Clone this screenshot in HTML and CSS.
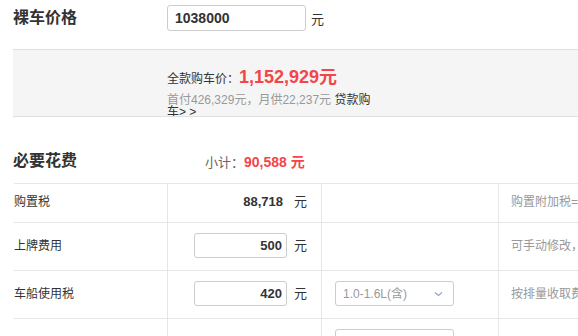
FILE: index.html
```html
<!DOCTYPE html>
<html lang="zh-CN">
<head>
  <meta charset="UTF-8" />
  <meta name="viewport" content="width=device-width, initial-scale=1" />
  <title>购车计算器</title>
  <link rel="stylesheet" href="styles.css">
</head>
<body>

  <div class="calc">
    <div class="price-row">
      <h2 class="sec-title">裸车价格</h2>
      <input type="text" class="price-input" value="1038000" />
      <span class="unit">元</span>
    </div>

    <div class="total-box">
      <div class="total-inner">
        <div class="total-line">全款购车价：<strong class="total-num">1,152,929元</strong></div>
        <div class="loan-line">首付426,329元，月供22,237元 <a href="#" class="loan-link">贷款购车&gt; &gt;</a></div>
      </div>
    </div>

    <div class="sec-head">
      <h2 class="sec-title">必要花费</h2>
      <span class="subtotal">小计：<b>90,588 元</b></span>
    </div>

    <div class="fee-table">
      <div class="cell label">购置税</div>
      <div class="cell value"><span class="num">88,718</span><span class="unit">元</span></div>
      <div class="cell option"></div>
      <div class="cell note">购置附加税=购车价/(1+13%)×购置税率(10%)</div>

      <div class="cell label">上牌费用</div>
      <div class="cell value"><input type="text" class="fee-input" value="500" /><span class="unit">元</span></div>
      <div class="cell option"></div>
      <div class="cell note">可手动修改，不同地区收费标准不同</div>

      <div class="cell label">车船使用税</div>
      <div class="cell value"><input type="text" class="fee-input" value="420" /><span class="unit">元</span></div>
      <div class="cell option">
        <div class="select">
          <span>1.0-1.6L(含)</span>
          <svg width="9" height="6" viewBox="0 0 9 6"><path d="M1 1.5 L4.5 4.5 L8 1.5" fill="none" stroke="#8ea6cb" stroke-width="1.2"/></svg>
        </div>
      </div>
      <div class="cell note">按排量收取费用，各地标准略有不同</div>

      <div class="cell label"></div>
      <div class="cell value"></div>
      <div class="cell option">
        <div class="select">
          <span></span>
          <svg width="9" height="6" viewBox="0 0 9 6"><path d="M1 1.5 L4.5 4.5 L8 1.5" fill="none" stroke="#8ea6cb" stroke-width="1.2"/></svg>
        </div>
      </div>
      <div class="cell note"></div>
    </div>
  </div>

</body>
</html>
```

FILE: styles.css
```css
* {
  margin: 0; padding: 0; box-sizing: border-box;
}
html, body {
  font-family: "Liberation Sans", "Noto Sans CJK SC", sans-serif;
  font-size: 12px;
  color: #333;
  background: #fff;
  overflow: hidden;
}

.calc {
  width: 800px;
  padding-left: 13px;
}

.sec-title {
  width: 154px;
  font-size: 16px;
  font-weight: 700;
  line-height: 22px;
  color: #333;
}

.unit {
  font-size: 13px;
  color: #333;
}

/* bare price */
.price-row {
  display: flex;
  align-items: center;
  padding-top: 5px;
  margin-bottom: 18px;
}

.price-input {
  width: 139px;
  height: 26px;
  padding: 0 7px;
  border: 1px solid #ccc;
  border-radius: 3px;
  font: 700 14px "Liberation Sans", sans-serif;
  color: #333;
  outline: none;
}
.price-row .unit {
  margin-left: 5px;
}

/* full price box */
.total-box {
  height: 68px;
  background: #f5f5f5;
  border-top: 1px solid #e0e0e0;
  border-bottom: 1px solid #e0e0e0;
  padding: 15px 0 0 154px;
  overflow: hidden;
}

.total-line {
  line-height: 24px;
  font-size: 12px;
}
.total-num {
  font-size: 18px;
  color: #f3454a;
}

.loan-line {
  width: 212px;
  margin-top: 3px;
  line-height: 12px;
  color: #999;
}
.loan-link {
  color: #333;
  text-decoration: none;
}

/* required fees */
.sec-head {
  display: flex;
  align-items: center;
  padding-top: 33px;
  margin-bottom: 11px;
}
.subtotal {
  margin-left: 38px;
  font-size: 13px;
  color: #666;
}
.subtotal b {
  font-size: 14px;
  color: #f3454a;
}

.fee-table {
  display: grid;
  grid-template-columns: 153px 154px 177px 300px;
  margin-left: 1px;
  border-top: 1px solid #e6e6e6;
}

.cell {
  display: flex;
  align-items: center;
  padding: 10px 0 12px;
  min-height: 39px;
  line-height: 16px;
  border-bottom: 1px solid #e6e6e6;
}
.cell + .cell {
  border-left: 1px solid #e6e6e6;
}
.cell.label {
  border-left: none;
}

.value {
  justify-content: flex-end;
  padding-right: 14px;
}
.num {
  font-size: 13px;
  font-weight: 700;
  margin-right: 11px;
}
.fee-input {
  width: 93px;
  height: 25px;
  padding: 0 4px;
  margin-right: 7px;
  border: 1px solid #ccc;
  border-radius: 3px;
  text-align: right;
  font: 700 13px "Liberation Sans", sans-serif;
  color: #333;
  outline: none;
}

.option {
  padding-left: 13px;
}
.select {
  width: 119px;
  height: 25px;
  display: flex;
  align-items: center;
  justify-content: space-between;
  padding: 0 10px 0 7px;
  border: 1px solid #ccc;
  border-radius: 3px;
  color: #999;
}

.note {
  padding-left: 12px;
  color: #999;
  white-space: nowrap;
}
```
